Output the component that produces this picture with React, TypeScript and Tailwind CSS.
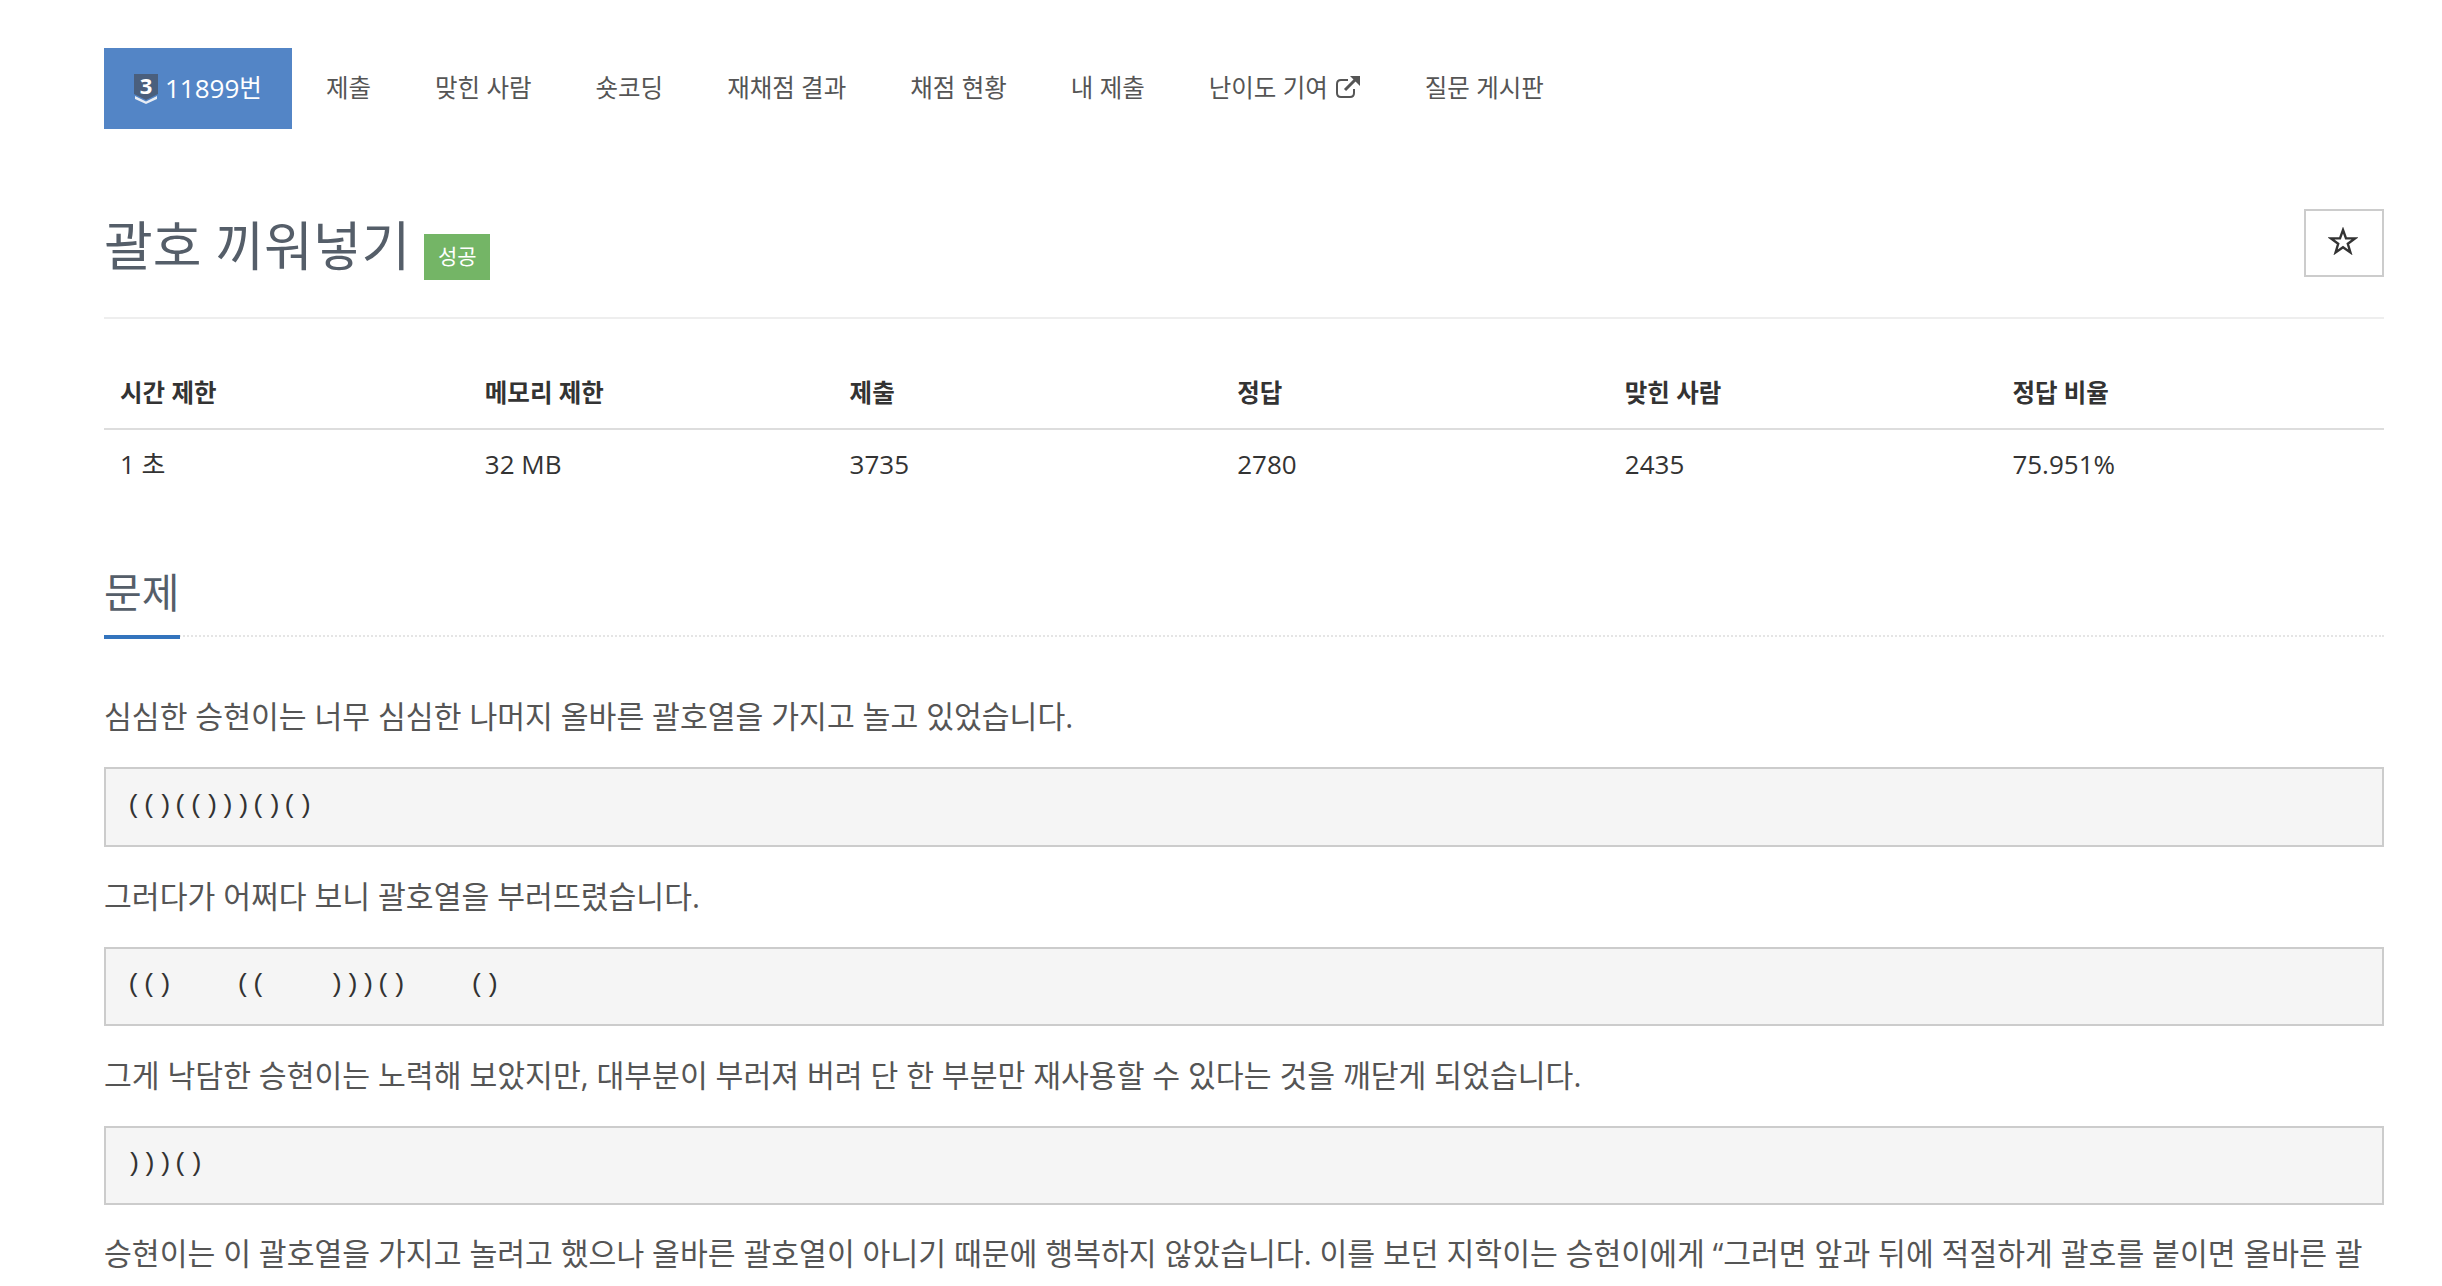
import React from 'react';

const fontStack = { fontFamily: '"Open Sans", "Noto Sans CJK KR", sans-serif' };

const tabs = ['제출', '맞힌 사람', '숏코딩', '재채점 결과', '채점 현황', '내 제출'];

const stats = [
  { label: '시간 제한', value: '1 초', width: 'w-[16%]' },
  { label: '메모리 제한', value: '32 MB', width: 'w-[16%]' },
  { label: '제출', value: '3735', width: 'w-[17%]' },
  { label: '정답', value: '2780', width: 'w-[17%]' },
  { label: '맞힌 사람', value: '2435', width: 'w-[17%]' },
  { label: '정답 비율', value: '75.951%', width: 'w-[17%]' },
];

function TierIcon() {
  return (
    <span className="relative inline-block w-[24px] h-[30px] mr-[7px]">
      <svg width="24" height="30" viewBox="0 0 24 30" className="block">
        <path d="M0 0H24V20L12 26L0 20Z" fill="#4a5f7d" />
        <path d="M1 22L12 27.5L23 22V25L12 30L1 25Z" fill="#e8edf4" />
      </svg>
      <span className="absolute left-0 right-0 top-[-5px] text-center text-[22px] font-bold text-white">3</span>
    </span>
  );
}

function ExternalIcon() {
  return (
    <svg width="26" height="24" viewBox="0 0 26 24" className="ml-[7px] -mt-[3px]" fill="none">
      <path d="M13 5H6Q2 5 2 9V18Q2 22 6 22H15Q19 22 19 18V14" stroke="#555" strokeWidth="2" />
      <path d="M10 15L21 4" stroke="#555" strokeWidth="3" />
      <path d="M15 1H25V11Z" fill="#555" />
    </svg>
  );
}

function Pre({ children, h }: { children: string; h: string }) {
  return (
    <pre className={`${h} border-2 border-[#ccc] bg-[#f5f5f5] px-[20px] pb-[3px] flex items-center text-[26px] text-[#333] font-['Liberation_Mono',monospace]`}>
      {children}
    </pre>
  );
}

export default function App() {
  return (
    <div className="h-[1286px] overflow-hidden bg-white px-[104px] pr-[58px] pt-[48px] text-[#555]" style={fontStack}>
      {/* 상단 탭 */}
      <ul className="flex gap-[4px] h-[81px] text-[24.5px]">
        <li className="flex items-center px-[30px] bg-[#5385c6] text-white">
          <TierIcon />
          <span className="text-[26px]">11899</span>번
        </li>
        {tabs.map((t) => (
          <li key={t} className="flex items-center px-[30px]">{t}</li>
        ))}
        <li className="flex items-center px-[30px]">
          난이도 기여
          <ExternalIcon />
        </li>
        <li className="flex items-center px-[30px]">질문 게시판</li>
      </ul>

      {/* 제목 */}
      <div className="mt-[80px] h-[110px] border-b-2 border-[#eee] flex justify-between items-start">
        <div className="flex items-start">
          <h1 className="text-[53px] leading-[74px] text-[#555e69] font-normal">괄호 끼워넣기</h1>
          <span className="ml-[14px] mt-[25px] w-[66px] h-[46px] bg-[#74b566] text-white text-[21px] flex items-center justify-center">성공</span>
        </div>
        <button className="w-[80px] h-[68px] border-2 border-[#ccc] flex items-center justify-center">
          <svg width="30" height="28" viewBox="0 0 30 28" className="-mt-[4px] -ml-[2px]">
            <path d="M15 3L18 11.4H27L19.8 16.8L22.4 25.4L15 20.2L7.6 25.4L10.2 16.8L3 11.4H12Z" fill="none" stroke="#333" strokeWidth="2.4" />
          </svg>
        </button>
      </div>

      {/* 통계 표 */}
      <table className="w-full mt-[40px] table-fixed text-left text-[24.5px]">
        <thead>
          <tr className="border-b-2 border-[#ddd] h-[70px]">
            {stats.map((s) => (
              <th key={s.label} className={`${s.width} px-[16px] font-bold text-[#333]`}>{s.label}</th>
            ))}
          </tr>
        </thead>
        <tbody>
          <tr className="h-[70px]">
            {stats.map((s) => (
              <td key={s.label} className="px-[16px] text-[26px] text-[#333]">{s.value}</td>
            ))}
          </tr>
        </tbody>
      </table>

      {/* 문제 */}
      <div className="mt-[65px] relative h-[73px] border-b-2 border-dotted border-[#e5e5e5]">
        <h2 className="mt-[2px] text-[41px] leading-[56px] text-[#555e69] font-normal">문제</h2>
        <span className="absolute left-0 bottom-[-4px] w-[76px] h-[4px] bg-[#3374bd]" />
      </div>

      <div className="mt-[55px] flex flex-col text-[30.25px] leading-[50px]">
        <p className="h-[50px]">심심한 승현이는 너무 심심한 나머지 올바른 괄호열을 가지고 놀고 있었습니다.</p>
        <div className="mt-[25px]"><Pre h="h-[80px]">{'(()(()))()()'}</Pre></div>
        <p className="mt-[25px] h-[50px]">그러다가 어쩌다 보니 괄호열을 부러뜨렸습니다.</p>
        <div className="mt-[25px]"><Pre h="h-[79px]">{'(()    ((    )))()    ()'}</Pre></div>
        <p className="mt-[25px] h-[50px]">그게 낙담한 승현이는 노력해 보았지만, 대부분이 부러져 버려 단 한 부분만 재사용할 수 있다는 것을 깨닫게 되었습니다.</p>
        <div className="mt-[25px]"><Pre h="h-[79px]">{')))()'}</Pre></div>
        <p className="mt-[24px] whitespace-nowrap">승현이는 이 괄호열을 가지고 놀려고 했으나 올바른 괄호열이 아니기 때문에 행복하지 않았습니다. 이를 보던 지학이는 승현이에게 “그러면 앞과 뒤에 적절하게 괄호를 붙이면 올바른 괄</p>
      </div>
    </div>
  );
}
